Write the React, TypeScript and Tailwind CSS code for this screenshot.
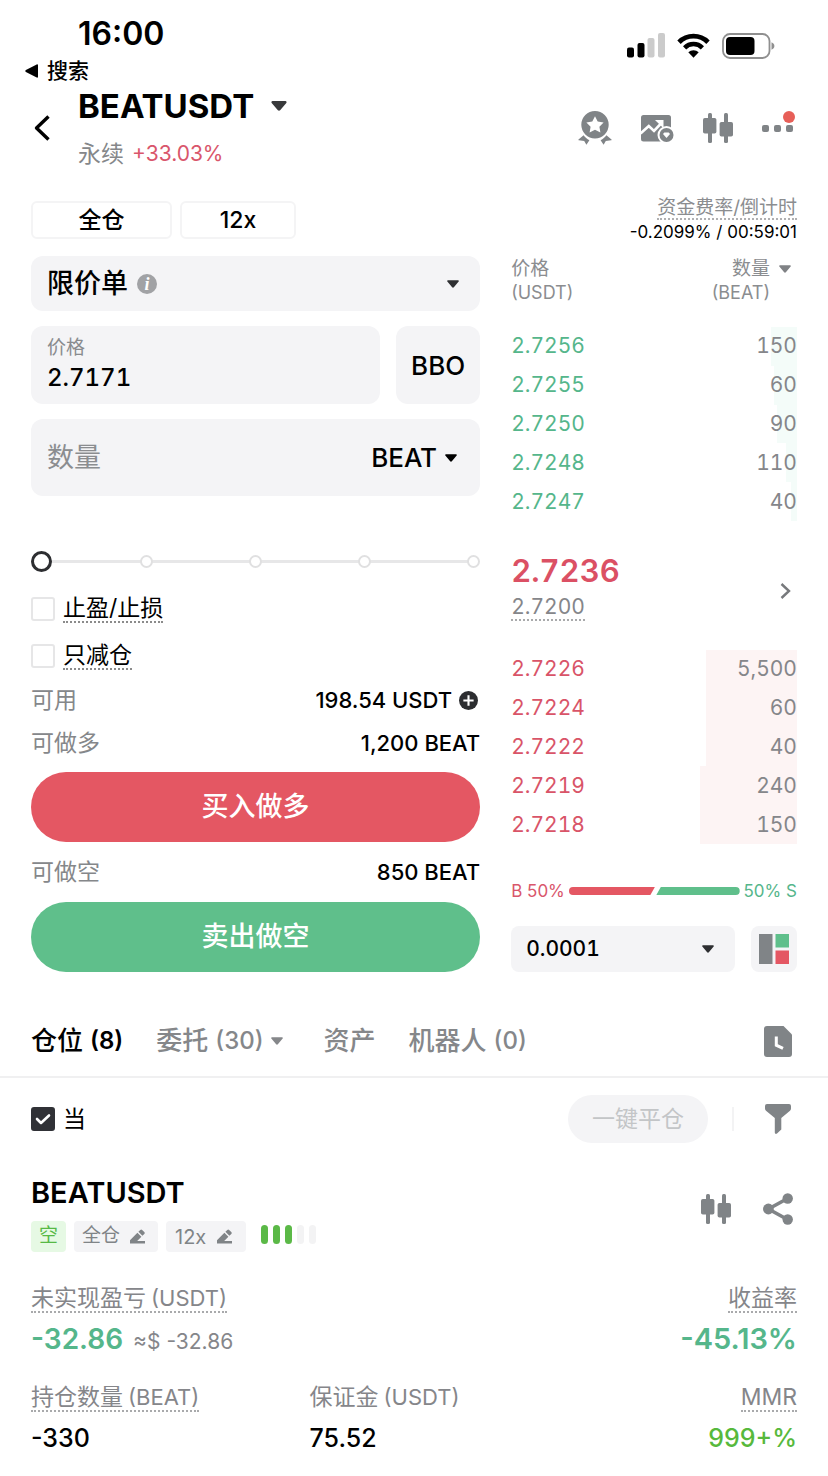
/*
 * Perpetual futures trading screen: status bar · pair header · order form beside the
 * order book · positions list with the current BEATUSDT position.
 */
import { useState, type ReactNode } from "react";
import clsx from "clsx";

type Level = { price: string; amount: string; depth: number };

const UPPER: Level[] = [
  { price: "2.7256", amount: "150", depth: 9 },
  { price: "2.7255", amount: "60", depth: 8 },
  { price: "2.7250", amount: "90", depth: 7 },
  { price: "2.7248", amount: "110", depth: 4 },
  { price: "2.7247", amount: "40", depth: 2 },
];

const LOWER: Level[] = [
  { price: "2.7226", amount: "5,500", depth: 32 },
  { price: "2.7224", amount: "60", depth: 32 },
  { price: "2.7222", amount: "40", depth: 32 },
  { price: "2.7219", amount: "240", depth: 34 },
  { price: "2.7218", amount: "150", depth: 34 },
];

function Caret({ className }: { className?: string }) {
  return (
    <svg viewBox="0 0 14 9" aria-hidden="true" className={clsx("shrink-0", className)}>
      <path d="M1.2 0h11.6c.9 0 1.4 1 .8 1.7L8 8.4c-.5.6-1.5.6-2 0L.4 1.7C-.2 1 .3 0 1.2 0z" fill="currentColor" />
    </svg>
  );
}

function CandlesIcon() {
  return (
    <svg viewBox="0 0 30 30" className="size-[30px]" fill="currentColor" aria-hidden="true">
      <rect x="5" y="0" width="4" height="30" rx="1.5" />
      <rect x="0" y="5" width="13.4" height="15.5" rx="1.8" />
      <rect x="21" y="0" width="4" height="30" rx="1.5" />
      <rect x="16.6" y="9" width="13.4" height="14.5" rx="1.8" />
    </svg>
  );
}

function MedalIcon() {
  return (
    <svg viewBox="0 0 34 34" className="size-[34px]" fill="currentColor" aria-hidden="true">
      <path
        fillRule="evenodd"
        d="M17 0a13.7 13.7 0 1 1 0 27.4a13.7 13.7 0 0 1 0-27.4zM17 5.200l-2.700 5.400-5.900.9 4.200 4.200-1 5.900 5.400-2.800 5.400 2.800-1-5.900 4.200-4.200-5.900-.9z"
      />
      <path d="M5.600 24.300c1.500 2.200 3.400 3.700 5.800 4.900l-3 4.500-2.200-3.800-5.400-.7c-.4-.1-.6-.5-.3-.8z" />
      <path d="M28.400 24.300c-1.500 2.200-3.400 3.700-5.800 4.900l3 4.500 2.200-3.800 5.400-.7c.4-.1.6-.5.3-.8z" />
    </svg>
  );
}

function ChartIcon() {
  return (
    <svg viewBox="0 0 33 27" className="h-[27px] w-[33px]" aria-hidden="true">
      <rect width="30" height="26.500" rx="2.500" fill="currentColor" />
      <path d="M-.5 18.500l8.300-7.500 5.200 5L20.500 8" fill="none" stroke="#fff" strokeWidth="2.600" />
      <path d="M14 5h8.500v8.200z" fill="#fff" />
      <circle cx="25.500" cy="20" r="9" fill="#fff" />
      <circle cx="25.500" cy="20" r="7" fill="currentColor" />
      <path d="M22 19l1.300-1.600h4.400L29 19l-3.500 4z" fill="#fff" />
    </svg>
  );
}

function EditIcon() {
  return (
    <svg viewBox="0 0 15 15" className="size-[15px]" fill="currentColor" aria-hidden="true">
      <path d="M0 14.500v-3.200L7.400 3.800l4 4-4.200 4.200H15v2.500zM8.400 2.800L10.300.9a1.300 1.300 0 0 1 1.800 0l2.200 2.200a1.300 1.300 0 0 1 0 1.800L12.400 6.800z" />
    </svg>
  );
}

function ShareIcon() {
  return (
    <svg viewBox="0 0 30 32" className="h-8 w-[30px]" aria-hidden="true">
      <path d="M24.500 5.500L5.500 16l19 10.500" fill="none" stroke="currentColor" strokeWidth="3.600" />
      <circle cx="24.700" cy="5.500" r="5.200" fill="currentColor" />
      <circle cx="5.400" cy="16" r="5.400" fill="currentColor" />
      <circle cx="24.700" cy="26.500" r="5.200" fill="currentColor" />
    </svg>
  );
}

function StatusBar() {
  return (
    <div className="flex items-start justify-between pt-[14px] pr-[53px] pl-[25px]">
      <div>
        <div className="h-10 pl-[53px] text-[32px] leading-10 font-semibold">16:00</div>
        <a href="#search" className="flex h-[33px] items-center gap-2 text-[21px] leading-8 font-medium">
          <svg viewBox="0 0 14 14" className="size-[14px]" aria-hidden="true">
            <path d="M13 1.200v11.600c0 .8-.6 1.200-1.300.8L.9 7.900C.1 7.500.1 6.500.9 6.100L11.700.4c.7-.4 1.300 0 1.300.8z" fill="currentColor" />
          </svg>
          搜索
        </a>
      </div>
      <div className="flex h-[63px] items-center gap-3">
        <svg viewBox="0 0 38 25" className="h-[25px] w-[38px]" aria-hidden="true">
          <rect x="0" y="14.500" width="7" height="10" rx="2" />
          <rect x="10.500" y="10" width="7" height="14.500" rx="2" />
          <rect x="20.500" y="5" width="7" height="19.500" rx="2" fill="#cbcbcb" />
          <rect x="31" y="0" width="7" height="24.500" rx="2" fill="#cbcbcb" />
        </svg>
        <svg viewBox="0 0 33 25" className="h-[25px] w-[33px]" fill="none" stroke="#000" aria-hidden="true">
          <path d="M2 9.200a20.500 20.500 0 0 1 29 0" strokeWidth="4.800" />
          <path d="M7.600 14.800a12.600 12.600 0 0 1 17.800 0" strokeWidth="4.500" />
          <path d="M11.300 19.300a7.400 7.400 0 0 1 10.400 0L16.500 24.800z" fill="#000" stroke="none" />
        </svg>
        <svg viewBox="0 0 53 26" className="h-[26px] w-[53px]" aria-hidden="true">
          <rect x="1" y="1" width="46.500" height="24" rx="7" fill="none" stroke="#8f8f8f" strokeWidth="1.800" />
          <rect x="4" y="4" width="28.500" height="18" rx="4" />
          <path d="M49.500 9.300c1.800.7 2.900 2 2.900 3.700s-1.100 3-2.900 3.700z" fill="#8f8f8f" />
        </svg>
      </div>
    </div>
  );
}

function PairHeader() {
  return (
    <header className="flex items-center justify-between px-[31px]">
      <div className="flex items-center">
        <button aria-label="返回" className="w-[47px] pl-[3px]">
          <svg viewBox="0 0 16 26" className="h-[26px] w-4" fill="none" stroke="#000" strokeWidth="3.400" strokeLinejoin="round" aria-hidden="true">
            <path d="M14.500 1.500L2.500 13l12 11.500" />
          </svg>
        </button>
        <div>
          <button className="flex h-[38px] items-center gap-[17px] text-[33px] leading-[38px] font-bold">
            BEATUSDT
            <Caret className="h-[10px] w-4 text-[#38393b]" />
          </button>
          <div className="mt-[14px] flex h-[30px] items-center gap-2 text-[23px] leading-[30px]">
            <span className="text-[#85878a]">永续</span>
            <span className="text-[21px] text-[#d9566b]">+33.03%</span>
          </div>
        </div>
      </div>
      <nav className="flex items-center gap-[29px] pr-1 text-[#808487]">
        <button aria-label="交易大赛"><MedalIcon /></button>
        <button aria-label="行情"><ChartIcon /></button>
        <button aria-label="K线图"><CandlesIcon /></button>
        <button aria-label="更多" className="relative flex gap-[5px]">
          <span className="size-[7px] rounded-xs bg-[#808487]" />
          <span className="size-[7px] rounded-xs bg-[#808487]" />
          <span className="size-[7px] rounded-xs bg-[#808487]" />
          <span className="absolute -top-[14px] -right-[2px] size-3 rounded-full bg-[#e75f58]" />
        </button>
      </nav>
    </header>
  );
}

function Check({ children, label, checked }: { children: ReactNode; label: string; checked?: boolean }) {
  return (
    <label className="flex items-center gap-2 text-[23px] leading-[26px]">
      <span className="relative size-6">
        <input
          type="checkbox"
          aria-label={label}
          defaultChecked={checked}
          className="peer block size-6 appearance-none rounded-[3px] border-2 border-[#e6e6e7] bg-white checked:border-[#303136] checked:bg-[#303136]"
        />
        <svg viewBox="0 0 24 24" className="pointer-events-none absolute inset-0 hidden size-6 peer-checked:block" fill="none" stroke="#fff" strokeWidth="2.600" aria-hidden="true">
          <path d="M6 12l4 4L18 8.500" strokeLinecap="round" strokeLinejoin="round" />
        </svg>
      </span>
      {children}
    </label>
  );
}

function AmountSlider() {
  const [value, setValue] = useState(0);
  return (
    <div className="relative flex h-[21px] items-center justify-between">
      <div className="absolute inset-x-2 h-[3px] bg-[#e7e7e8]" />
      {[0, 25, 50, 75, 100].map((stop) => (
        <span key={stop} className="relative size-[13px] rounded-full border-2 border-[#e0e0e1] bg-white" />
      ))}
      <input
        type="range"
        aria-label="数量百分比"
        min={0}
        max={100}
        value={value}
        onChange={(e) => setValue(Number(e.target.value))}
        className="absolute inset-0 m-0 h-full w-full appearance-none bg-transparent [&::-webkit-slider-thumb]:size-[21px] [&::-webkit-slider-thumb]:appearance-none [&::-webkit-slider-thumb]:rounded-full [&::-webkit-slider-thumb]:border-3 [&::-webkit-slider-thumb]:border-[#2d2e31] [&::-webkit-slider-thumb]:bg-white"
      />
    </div>
  );
}

function OrderForm() {
  return (
    <form className="flex min-w-0 flex-col" onSubmit={(e) => e.preventDefault()}>
      <div className="flex gap-2 text-[23px] font-medium">
        <button type="button" className="h-[38px] w-[141px] rounded-md border-2 border-[#f4f4f5] leading-8">全仓</button>
        <button type="button" className="h-[38px] w-[116px] rounded-md border-2 border-[#f4f4f5] leading-8">12x</button>
      </div>

      <div className="mt-[17px] flex h-[55px] items-center rounded-xl bg-[#f4f4f6] pr-[21px] pl-4">
        <select aria-label="订单类型" className="appearance-none bg-transparent text-[27px] leading-9 font-medium">
          <option>限价单</option>
        </select>
        <button type="button" aria-label="说明" className="ml-[9px] flex size-5 items-center justify-center rounded-full bg-[#a1a2a5] font-['Liberation_Serif',serif] text-lg leading-5 font-bold text-white italic">
          i
        </button>
        <span className="flex-1" />
        <Caret className="h-2 w-3 text-[#2e2f32]" />
      </div>

      <div className="mt-[15px] flex gap-4">
        <div className="flex h-[78px] min-w-0 flex-1 flex-col justify-end rounded-xl bg-[#f4f4f6] px-4 pb-2">
          <label htmlFor="price" className="text-[19px] leading-6 text-[#898b8e]">价格</label>
          <input id="price" defaultValue="2.7171" className="h-9 w-full bg-transparent text-[24px] leading-9 font-medium tabular-nums outline-none" />
        </div>
        <button type="button" className="h-[78px] w-[84px] rounded-xl bg-[#f4f4f6] text-[26px] font-medium">BBO</button>
      </div>

      <div className="mt-[15px] flex h-[77px] items-center gap-2 rounded-xl bg-[#f4f4f6] pr-[23px] pl-4">
        <input aria-label="数量" placeholder="数量" className="min-w-0 flex-1 bg-transparent text-[27px] leading-9 outline-none placeholder:text-[#8b8d90]" />
        <select aria-label="单位" className="appearance-none bg-transparent text-[26px] leading-9 font-medium">
          <option>BEAT</option>
        </select>
        <Caret className="h-2 w-3" />
      </div>

      <div className="mt-[55px]"><AmountSlider /></div>

      <div className="mt-[23px] flex flex-col items-start gap-[19px]">
        <Check label="止盈/止损">
          <span className="border-b-2 border-dotted border-[#8b8b8b]">止盈/止损</span>
        </Check>
        <Check label="只减仓">
          <span className="border-b-2 border-dotted border-[#8b8b8b]">只减仓</span>
        </Check>
      </div>

      <dl className="mt-[15px] flex flex-col gap-[13px] text-[22px] leading-[30px]">
        <div className="flex items-center justify-between">
          <dt className="text-[23px] text-[#85878a]">可用</dt>
          <dd className="flex items-center gap-[7px] font-medium">
            198.54 USDT
            <button type="button" aria-label="充值" className="mr-[2px]">
              <svg viewBox="0 0 20 20" className="size-[19px]" aria-hidden="true">
                <circle cx="10" cy="10" r="10" fill="#2c2d30" />
                <path d="M10 4.600v10.800M4.600 10h10.800" stroke="#fff" strokeWidth="2.200" />
              </svg>
            </button>
          </dd>
        </div>
        <div className="flex items-center justify-between">
          <dt className="text-[23px] text-[#85878a]">可做多</dt>
          <dd className="font-medium">1,200 BEAT</dd>
        </div>
      </dl>
      <button className="mt-[14px] h-[70px] rounded-full bg-[#e45763] text-[27px] font-medium text-white">买入做多</button>
      <div className="mt-[15px] flex items-center justify-between text-[22px] leading-[30px]">
        <span className="text-[23px] text-[#85878a]">可做空</span>
        <span className="font-medium">850 BEAT</span>
      </div>
      <button className="mt-[15px] h-[70px] rounded-full bg-[#5fbf8b] text-[27px] font-medium text-white">卖出做空</button>
    </form>
  );
}

function Book({ levels, side }: { levels: Level[]; side: "upper" | "lower" }) {
  const tint = side === "upper" ? "#f4fcf9" : "#fdf4f4";
  return (
    <table className="h-[194px] w-full text-[21px] leading-[30px] tabular-nums">
      <tbody>
        {levels.map((l) => (
          <tr key={l.price} style={{ background: `linear-gradient(to left, ${tint} ${l.depth}%, transparent ${l.depth}%)` }}>
            <td className={clsx("p-0", side === "upper" ? "text-[#55b68b]" : "text-[#d95468]")}>{l.price}</td>
            <td className="p-0 text-right text-[#85868a]">{l.amount}</td>
          </tr>
        ))}
      </tbody>
    </table>
  );
}

function OrderBook() {
  return (
    <section className="flex min-w-0 flex-col">
      <div className="flex flex-col items-end">
        <span className="-mt-[3px] border-b-2 border-dotted border-[#b0b0b2] text-[19px] leading-5 text-[#8b8d90]">资金费率/倒计时</span>
        <span className="text-[17px] leading-6">-0.2099% / 00:59:01</span>
      </div>
      <div className="mt-[13px] flex justify-between text-[19px] leading-6 text-[#8b8d90]">
        <div>
          价格
          <div className="text-lg leading-6">(USDT)</div>
        </div>
        <button className="flex items-start gap-[9px] pr-[6px] text-right">
          <span>
            数量
            <span className="block text-lg leading-6">(BEAT)</span>
          </span>
          <Caret className="mt-2 h-2 w-3 text-[#808285]" />
        </button>
      </div>

      <div className="mt-[22px]"><Book levels={UPPER} side="upper" /></div>

      <div className="mt-[31px] flex items-center justify-between">
        <div className="flex flex-col items-start tabular-nums">
          <span className="text-[31px] leading-[38px] font-semibold text-[#db5064]">2.7236</span>
          <span className="mt-[5px] border-b-2 border-dotted border-[#a9aaac] text-[21px] leading-6 text-[#85868a]">2.7200</span>
        </div>
        <button aria-label="查看详情" className="pt-2 pr-[6px]">
          <svg viewBox="0 0 11 16" className="h-4 w-[11px]" fill="none" stroke="#77797c" strokeWidth="2.400" aria-hidden="true">
            <path d="M1.500 1l7.500 7-7.500 7" />
          </svg>
        </button>
      </div>

      <div className="mt-[29px]"><Book levels={LOWER} side="lower" /></div>

      <div className="mt-[35px] flex h-6 items-center gap-1 text-[17px] leading-6">
        <span className="text-[#d9566b]">B 50%</span>
        <svg viewBox="0 0 172 8" preserveAspectRatio="none" className="h-2 min-w-0 flex-1" aria-hidden="true">
          <path d="M4 0h82.500L82 8H4a4 4 0 0 1 0-8z" fill="#e45763" />
          <path d="M92.500 0H168a4 4 0 0 1 0 8H88z" fill="#5fbf8b" />
        </svg>
        <span className="text-[#55b68b]">50% S</span>
      </div>

      <div className="mt-[23px] flex h-[46px] gap-4">
        <div className="flex min-w-0 flex-1 items-center justify-between rounded-lg bg-[#f4f4f6] pr-[21px] pl-[15px]">
          <select aria-label="深度精度" className="appearance-none bg-transparent text-[21px] leading-[30px] font-medium tabular-nums">
            <option>0.0001</option>
          </select>
          <Caret className="h-2 w-3 text-[#2e2f32]" />
        </div>
        <button aria-label="盘口布局" className="flex size-[46px] items-center justify-center rounded-lg bg-[#f4f4f6]">
          <svg viewBox="0 0 30 30" className="size-[30px]" aria-hidden="true">
            <rect width="13.500" height="30" fill="#808487" />
            <rect x="16.500" width="13.500" height="13.500" fill="#5fbf8b" />
            <rect x="16.500" y="16.500" width="13.500" height="13.500" fill="#e45763" />
          </svg>
        </button>
      </div>
    </section>
  );
}

function Tabs() {
  return (
    <div className="mt-[34px] flex h-[72px] items-center justify-between border-b-2 border-[#f0f0f1] px-[31px] text-[26px] leading-9 font-medium text-[#85878a]">
      <div className="flex items-center">
        <button className="flex gap-[7px] text-black">
          仓位 <span className="text-[24px] font-semibold">(8)</span>
        </button>
        <button className="ml-[33px] flex items-center gap-[7px]">
          委托 <span className="text-[24px]">(30)</span>
          <Caret className="h-2 w-3" />
        </button>
        <button className="ml-[41px]">资产</button>
        <button className="ml-[33px] flex gap-[7px]">
          机器人 <span className="text-[24px]">(0)</span>
        </button>
      </div>
      <button aria-label="历史记录" className="pr-[5px]">
        <svg viewBox="0 0 28 31" className="h-[31px] w-7" aria-hidden="true">
          <path d="M3 0h16.500L28 8.500V28a3 3 0 0 1-3 3H3a3 3 0 0 1-3-3V3a3 3 0 0 1 3-3z" fill="#808487" />
          <path d="M12.300 10.500v8.700l6.700 3.200" fill="none" stroke="#fff" strokeWidth="3" />
        </svg>
      </button>
    </div>
  );
}

function Stat({ label, unit, align, plain, children }: {
  label: string;
  unit?: string;
  align?: "right";
  plain?: boolean;
  children: ReactNode;
}) {
  return (
    <div className={clsx("flex flex-col", align === "right" ? "items-end" : "items-start")}>
      <dt className={clsx("flex gap-[5px] border-b-2 border-dotted text-[23px] leading-[26px] font-normal text-[#85868a]", plain ? "border-transparent" : "border-[#a9aaac]")}>
        {label}
        {unit && <span className="text-[22px]">{unit}</span>}
      </dt>
      <dd className="mt-2 flex items-baseline gap-[10px] leading-9">{children}</dd>
    </div>
  );
}

function Position() {
  return (
    <article className="px-[31px] pt-8">
      <div className="flex items-start justify-between">
        <div>
          <h2 className="text-[29px] leading-9 font-semibold">BEATUSDT</h2>
          <div className="mt-[10px] flex h-[31px] items-center gap-2 text-[19px] text-[#808487]">
            <span className="flex h-full w-[35px] items-center justify-center rounded bg-[#e6f9e4] text-[#57b946]">空</span>
            <button className="flex h-full items-center gap-[10px] rounded bg-[#f4f4f6] px-2 pr-[13px]">
              全仓 <EditIcon />
            </button>
            <button className="flex h-full items-center gap-[11px] rounded bg-[#f4f4f6] px-[9px] pr-[14px] text-xl">
              12x <EditIcon />
            </button>
            <div className="ml-[7px] flex h-[23px] gap-[5px]">
              {[1, 2, 3, 4, 5].map((n) => (
                <span key={n} className={clsx("h-[19px] w-[7px] rounded-full", n <= 3 ? "bg-[#5bb947]" : "bg-[#f3f3f4]")} />
              ))}
            </div>
          </div>
        </div>
        <div className="flex items-center gap-8 pt-[18px] pr-1 text-[#808487]">
          <button aria-label="K线图"><CandlesIcon /></button>
          <button aria-label="分享"><ShareIcon /></button>
        </div>
      </div>

      <dl className="mt-[33px] flex justify-between">
        <Stat label="未实现盈亏" unit="(USDT)">
          <span className="text-[28px] font-semibold text-[#55b68b]">-32.86</span>
          <span className="text-[21px] text-[#85868a]">≈$ -32.86</span>
        </Stat>
        <Stat label="收益率" align="right">
          <span className="text-[29px] font-semibold text-[#55b68b]">-45.13%</span>
        </Stat>
      </dl>
      <dl className="mt-6 grid grid-cols-[4fr_4fr_3fr] pb-5 text-[25px] font-medium">
        <Stat label="持仓数量" unit="(BEAT)">-330</Stat>
        <Stat label="保证金" unit="(USDT)" plain>75.52</Stat>
        <Stat label="MMR" align="right"><span className="text-[#57b93c]">999+%</span></Stat>
      </dl>
    </article>
  );
}

export default function App() {
  return (
    <main className="min-h-screen bg-white font-['Inter','Noto_Sans_CJK_SC',sans-serif] text-black">
      <StatusBar />
      <PairHeader />
      <div className="mt-8 grid grid-cols-[minmax(0,11fr)_minmax(0,7fr)] gap-[31px] px-[31px]">
        <OrderForm />
        <OrderBook />
      </div>
      <Tabs />
      <div className="mt-[17px] flex h-12 items-center justify-between px-[31px]">
        <Check label="当" checked>
          <span>当</span>
        </Check>
        <div className="flex items-center">
          <button disabled className="h-12 w-[140px] rounded-full bg-[#f4f4f6] text-[23px] text-[#c3c5c7]">一键平仓</button>
          <span className="ml-6 h-6 w-[2px] bg-[#f3f3f4]" />
          <button aria-label="筛选" className="pr-[6px] pl-[31px]">
            <svg viewBox="0 0 26 30" className="h-[30px] w-[26px]" fill="#808487" aria-hidden="true">
              <path d="M2 0h22a2 2 0 0 1 2 2v2.500a3 3 0 0 1-1 2.200L16.300 14v11.500L12 29.500c-1 .8-2.200.3-2.200-1V14L1 6.700a3 3 0 0 1-1-2.200V2a2 2 0 0 1 2-2z" />
            </svg>
          </button>
        </div>
      </div>
      <Position />
    </main>
  );
}
